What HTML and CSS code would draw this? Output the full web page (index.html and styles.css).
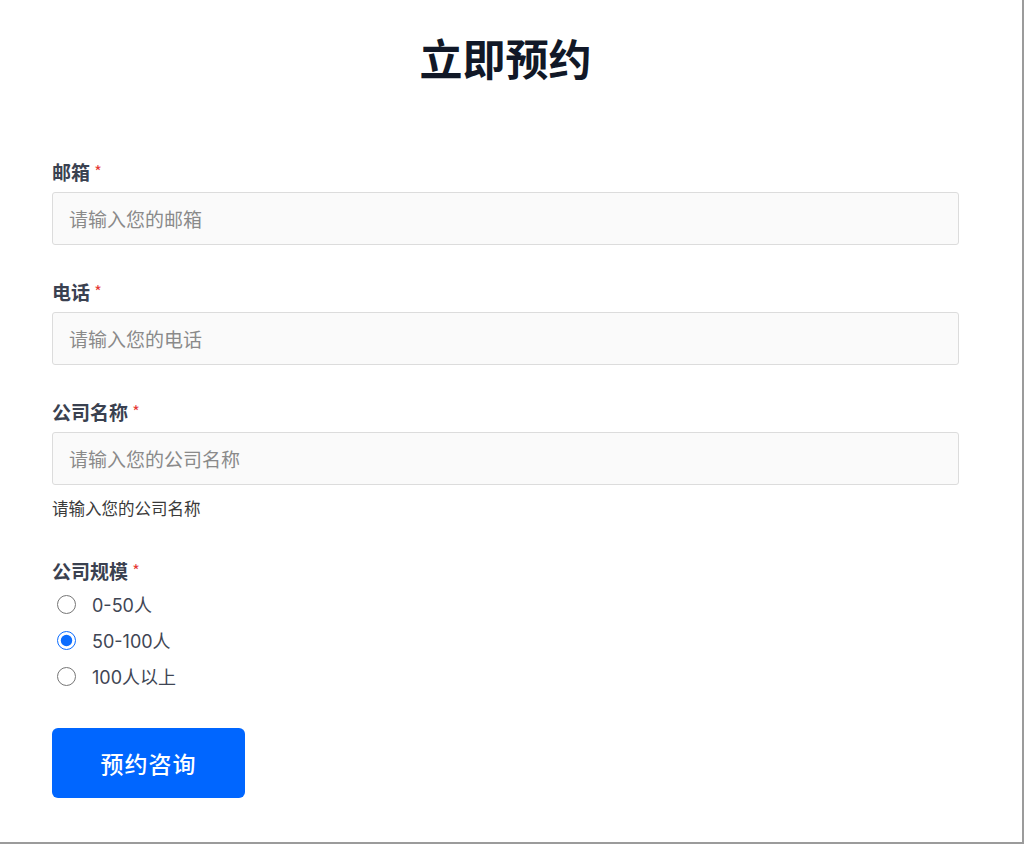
FILE: index.html
```html
<!DOCTYPE html>
<html lang="zh-CN">
<head>
<meta charset="utf-8">
<title>立即预约</title>
<link rel="stylesheet" href="styles.css">
</head>
<body>
<div class="frame"></div>
<main class="page">
  <h1 class="title">立即预约</h1>
  <form class="form">
    <div class="field">
      <label class="label" for="email">邮箱 <span class="req">*</span></label>
      <input class="input" id="email" type="text" placeholder="请输入您的邮箱">
    </div>
    <div class="field">
      <label class="label" for="phone">电话 <span class="req">*</span></label>
      <input class="input" id="phone" type="text" placeholder="请输入您的电话">
    </div>
    <div class="field">
      <label class="label" for="company">公司名称 <span class="req">*</span></label>
      <input class="input" id="company" type="text" placeholder="请输入您的公司名称">
      <div class="help">请输入您的公司名称</div>
    </div>
    <div class="field field-radio">
      <div class="label">公司规模 <span class="req">*</span></div>
      <label class="radio-row"><input type="radio" name="size" class="radio"><span>0-50人</span></label>
      <label class="radio-row"><input type="radio" name="size" class="radio" checked><span>50-100人</span></label>
      <label class="radio-row"><input type="radio" name="size" class="radio"><span>100人以上</span></label>
    </div>
    <button type="button" class="submit">预约咨询</button>
  </form>
</main>
</body>
</html>
```

FILE: styles.css
```css
html, body {
  margin: 0;
  padding: 0;
  background: #ffffff;
}
body {
  font-family: Inter, "Noto Sans CJK SC", sans-serif;
  color: #374151;
  width: 1024px;
  height: 844px;
  overflow: hidden;
}
.frame {
  position: fixed;
  left: 0;
  top: 0;
  width: 1024px;
  height: 844px;
  box-sizing: border-box;
  border-right: 2px solid #9b9b9b;
  border-bottom: 2px solid #9b9b9b;
  pointer-events: none;
}
.page {
  width: 907px;
  margin-left: 52px;
  padding-top: 31px;
}
.title {
  margin: 0 0 77px 0;
  height: 52px;
  text-align: center;
  font-size: 43px;
  line-height: 52px;
  font-weight: 700;
  color: #111827;
  font-family: "Noto Sans CJK SC", sans-serif;
}
.form {
  display: flex;
  flex-direction: column;
}
.field {
  display: flex;
  flex-direction: column;
  margin-bottom: 35px;
}
.label {
  display: block;
  height: 24px;
  font-size: 19px;
  line-height: 24px;
  font-weight: 700;
  color: #3a4150;
  margin-bottom: 8px;
  font-family: "Noto Sans CJK SC", sans-serif;
}
.req {
  display: inline-block;
  color: #e53935;
  font-weight: 400;
  font-size: 16px;
  line-height: 16px;
  vertical-align: 2px;
}
.input {
  box-sizing: border-box;
  height: 53px;
  width: 100%;
  border: 1px solid #dcdcdc;
  border-radius: 3px;
  background: #fafafa;
  padding: 0 16px;
  font-size: 19px;
  font-family: "Noto Sans CJK SC", sans-serif;
  color: #333;
  outline: none;
}
.input::placeholder {
  color: #8a8a8a;
}
.help {
  height: 22px;
  margin-top: 12px;
  font-size: 16.5px;
  line-height: 22px;
  color: #3a3a3a;
  font-family: "Noto Sans CJK SC", sans-serif;
}
.field-radio {
  margin-top: 5px;
  margin-bottom: 34px;
}
.field-radio .label {
  margin-bottom: 3px;
}
.radio-row {
  display: flex;
  align-items: center;
  height: 36px;
  font-size: 18px;
  color: #3f4654;
  cursor: pointer;
}
.radio {
  width: 19px;
  height: 19px;
  margin: 0 16px 0 5px;
  accent-color: #0a6cff;
}
.submit {
  align-self: flex-start;
  width: 193px;
  height: 70px;
  border: none;
  border-radius: 6px;
  background: #0066ff;
  color: #ffffff;
  font-size: 23px;
  font-weight: 500;
  font-family: "Noto Sans CJK SC", sans-serif;
  letter-spacing: 1px;
  cursor: pointer;
}
```
